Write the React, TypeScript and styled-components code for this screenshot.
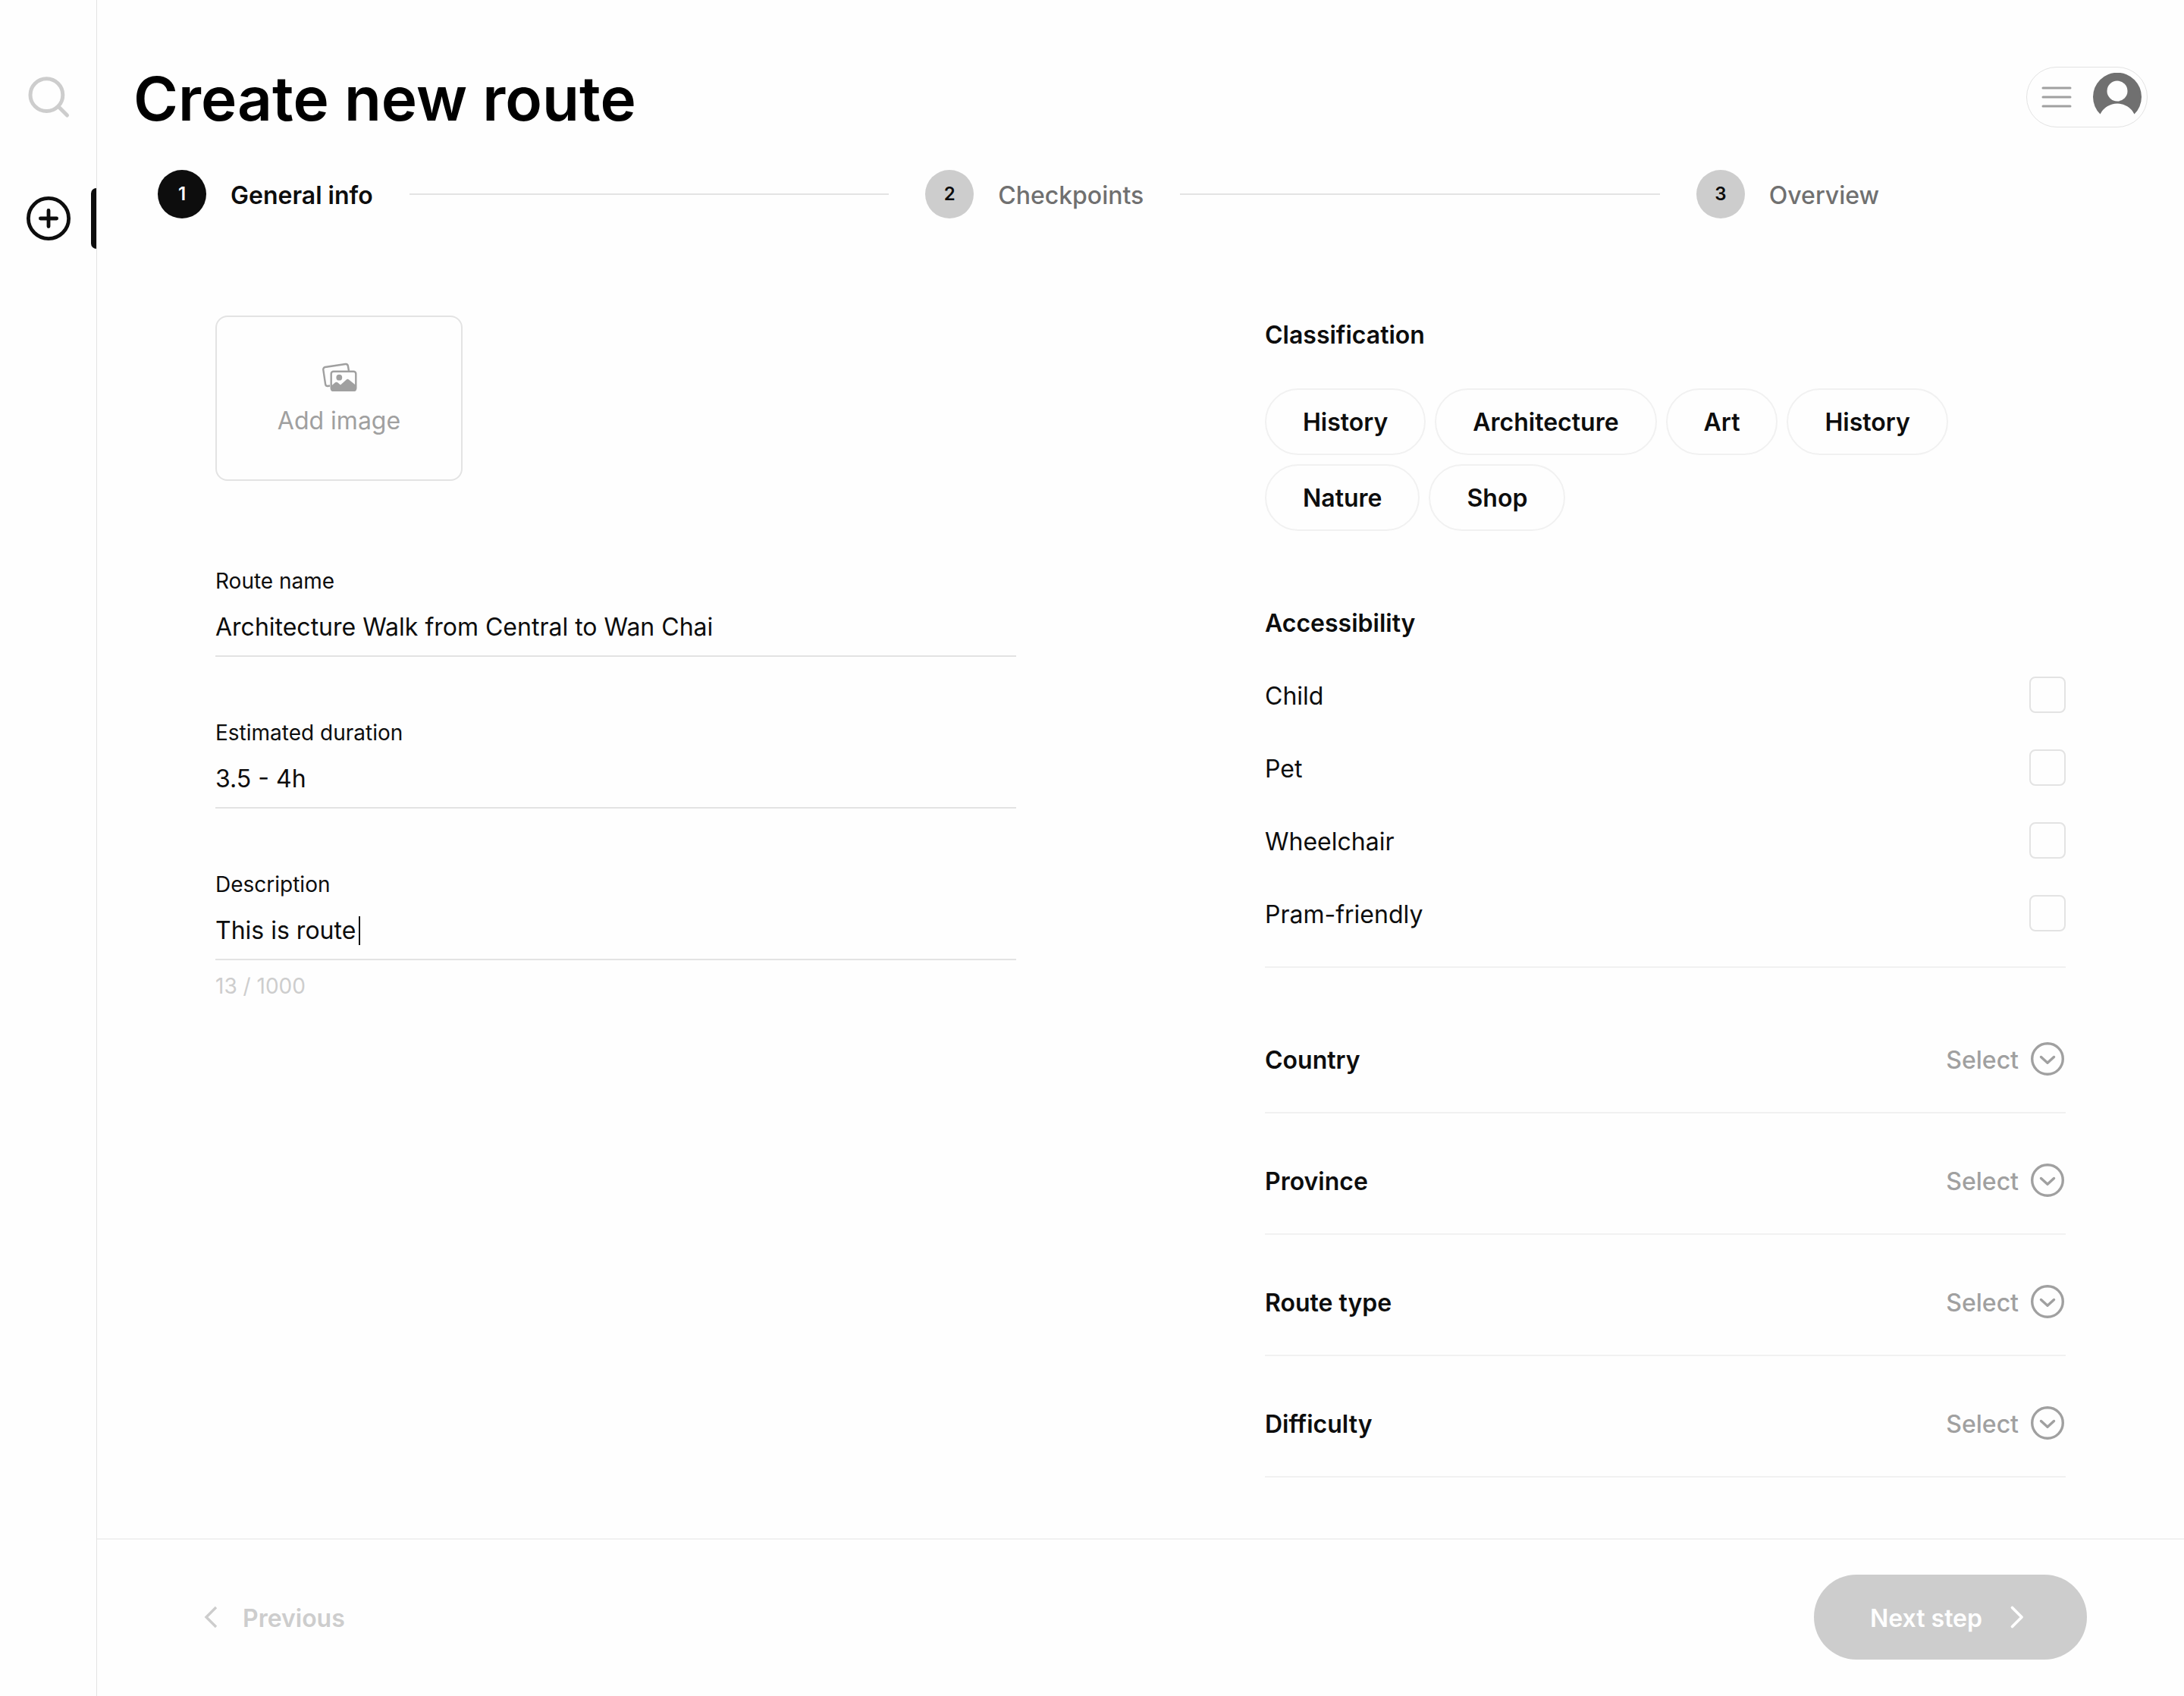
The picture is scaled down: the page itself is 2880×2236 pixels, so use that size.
import React, { useState } from "react";
import styled, { createGlobalStyle, css } from "styled-components";

const color = {
  page: "#fefefe",
  ink: "#0d0d0d",
  title: "#000000",
  grey: "#707070",
  mid: "#a0a0a0",
  soft: "#cdcdcd",
  line: "#e3e3e3",
  faint: "#f1f1f1",
};

const rowText = css`
  padding-top: 4px;
  line-height: 44px;
`;

const GlobalStyle = createGlobalStyle`
  *, *::before, *::after { box-sizing: border-box; }
  body { margin: 0; background: ${color.page}; }
  body, button, input, select {
    font-family: Inter, "Liberation Sans", sans-serif;
    font-size: 32px;
    line-height: 48px;
    color: ${color.ink};
  }
  button { background: none; border: 0; padding: 0; cursor: pointer; }
  svg { display: block; flex: none; }
`;

const Shell = styled.div`
  display: flex;
  min-height: 100vh;
`;

const Sidebar = styled.nav`
  flex: none;
  width: 128px;
  border-right: 1px solid ${color.line};
  padding: 88px 0 0 1px;
  display: flex;
  flex-direction: column;
  gap: 80px;
`;

const NavButton = styled.button<{ $active?: boolean }>`
  position: relative;
  display: flex;
  align-items: center;
  justify-content: center;
  height: 80px;
  color: ${(p) => (p.$active ? color.ink : color.soft)};

  &::after {
    content: "";
    display: ${(p) => (p.$active ? "block" : "none")};
    position: absolute;
    top: 0;
    right: 0;
    width: 7px;
    height: 100%;
    border-radius: 8px 0 0 8px;
    background: ${color.ink};
  }
`;

const Content = styled.div`
  flex: 1;
  min-width: 0;
  display: flex;
  flex-direction: column;
`;

const Header = styled.header`
  display: flex;
  align-items: center;
  justify-content: space-between;
  padding: 80px 48px 0;
`;

const Title = styled.h1`
  margin: 0;
  padding-top: 4px;
  font-size: 80px;
  line-height: 92px;
  font-weight: 600;
  color: ${color.title};
`;

const AccountButton = styled.button`
  display: flex;
  align-items: center;
  justify-content: space-between;
  width: 160px;
  height: 80px;
  padding: 0 7px 0 15px;
  border: 1px solid ${color.line};
  border-radius: 40px;
`;

const Steps = styled.ol`
  display: flex;
  align-items: center;
  gap: 48px;
  list-style: none;
  margin: 0;
  padding: 48px 402px 0 80px;
`;

const Step = styled.li<{ $active?: boolean }>`
  display: flex;
  align-items: center;
  gap: 32px;
  font-weight: ${(p) => (p.$active ? 600 : 500)};
  color: ${(p) => (p.$active ? color.ink : color.grey)};
`;

const StepNumber = styled.span<{ $active?: boolean }>`
  display: grid;
  place-items: center;
  width: 64px;
  height: 64px;
  border-radius: 50%;
  font-size: 24px;
  line-height: 32px;
  font-weight: 600;
  background: ${(p) => (p.$active ? color.ink : color.soft)};
  color: ${(p) => (p.$active ? color.page : color.ink)};
`;

const StepLine = styled.li`
  flex: 1;
  height: 2px;
  background: ${color.line};
`;

const RowText = styled.span`
  ${rowText}
`;

const Form = styled.main`
  flex: 1;
  display: grid;
  grid-template-columns: 1fr 1fr;
  column-gap: 328px;
  padding: 128px 156px 80px;
`;

const Column = styled.div`
  display: flex;
  flex-direction: column;
`;

const ImageButton = styled.button`
  display: flex;
  flex-direction: column;
  align-items: center;
  justify-content: center;
  gap: 12px;
  width: 326px;
  height: 218px;
  border: 2px solid ${color.line};
  border-radius: 16px;
  color: ${color.mid};
`;

const Fields = styled.div`
  display: flex;
  flex-direction: column;
  gap: 80px;
  margin-top: 112px;
`;

const Field = styled.div`
  display: flex;
  flex-direction: column;
`;

const FieldLabel = styled.label`
  font-size: 28px;
  line-height: 40px;
`;

const FieldBox = styled.div`
  display: flex;
  align-items: center;
  gap: 4px;
  height: 80px;
  padding-top: 4px;
  border-bottom: 2px solid ${color.line};
`;

const TextInput = styled.input<{ $hug?: boolean }>`
  flex: ${(p) => (p.$hug ? "none" : "1")};
  field-sizing: ${(p) => (p.$hug ? "content" : "fixed")};
  min-width: 0;
  padding: 0;
  border: 0;
  outline: 0;
  background: none;
  caret-color: ${(p) => (p.$hug ? "transparent" : "auto")};
`;

const Caret = styled.span`
  width: 2px;
  height: 38px;
  background: ${color.ink};
`;

const Counter = styled.span`
  margin-top: 14px;
  font-size: 28px;
  line-height: 40px;
  color: ${color.soft};
`;

const SectionTitle = styled.h2`
  margin: 0;
  font-size: 32px;
  font-weight: 600;
  ${rowText}
`;

const Tags = styled.div`
  display: flex;
  flex-wrap: wrap;
  gap: 12px;
  margin: 48px 0 96px;
`;

const Tag = styled.button`
  height: 88px;
  padding: 2px 48px 0;
  border: 2px solid ${color.faint};
  border-radius: 44px;
  font-weight: 600;
`;

const CheckList = styled.div`
  display: flex;
  flex-direction: column;
  gap: 48px;
  padding: 48px 0 46px;
  border-bottom: 2px solid ${color.faint};
  margin-bottom: 32px;
`;

const CheckRow = styled.label`
  display: flex;
  align-items: center;
  justify-content: space-between;
`;

const CheckBox = styled.input`
  appearance: none;
  width: 48px;
  height: 48px;
  margin: 0;
  border: 2px solid ${color.line};
  border-radius: 8px;
  cursor: pointer;

  &:checked { background: ${color.ink}; }
`;

const SelectRow = styled.div`
  display: flex;
  align-items: center;
  justify-content: space-between;
  padding: 64px 0 46px;
  border-bottom: 2px solid ${color.faint};
`;

const SelectLabel = styled.label`
  font-weight: 600;
  ${rowText}
`;

const SelectBox = styled.div`
  display: flex;
  align-items: center;
  gap: 14px;
  color: ${color.mid};
`;

const SelectInput = styled.select`
  appearance: none;
  field-sizing: content;
  padding: 0;
  border: 0;
  background: none;
  font-weight: 500;
  color: inherit;
  cursor: pointer;
  ${rowText}
`;

const Footer = styled.footer`
  display: flex;
  align-items: center;
  justify-content: space-between;
  padding: 46px 128px 48px;
  border-top: 2px solid ${color.faint};
`;

const FooterButton = styled.button<{ $filled?: boolean }>`
  display: flex;
  align-items: center;
  gap: ${(p) => (p.$filled ? "30px" : "20px")};
  height: 112px;
  padding: ${(p) => (p.$filled ? "0 76px 0 74px" : "0 12px")};
  border-radius: 56px;
  font-weight: 600;
  background: ${(p) => (p.$filled ? color.soft : "none")};
  color: ${(p) => (p.$filled ? color.page : color.soft)};
`;

const SearchIcon = () => (
  <svg width="64" height="64" viewBox="0 0 64 64" fill="none" stroke="currentColor" strokeWidth="5" strokeLinecap="round" aria-hidden="true">
    <circle cx="29.4" cy="29.2" r="21.4" />
    <path d="M45.5 45 56.5 56" />
  </svg>
);

const PlusIcon = () => (
  <svg width="64" height="64" viewBox="0 0 64 64" fill="none" stroke="currentColor" strokeWidth="4.8" strokeLinecap="round" aria-hidden="true">
    <circle cx="32" cy="32" r="26.6" />
    <path d="M32 21.400v21.200M21.400 32h21.200" />
  </svg>
);

const MenuIcon = () => (
  <svg width="48" height="48" viewBox="0 0 48 48" fill="none" stroke={color.mid} strokeWidth="3" strokeLinecap="round" aria-hidden="true">
    <path d="M6 12h36M6 24h36M6 36h36" />
  </svg>
);

const AvatarIcon = () => (
  <svg width="64" height="64" viewBox="0 0 64 64" aria-hidden="true">
    <path fill={color.grey} d="M9.500 54.500A32 32 0 1 1 54.500 54.500A25 25 0 0 0 9.500 54.500Z" />
    <circle cx="32" cy="24" r="13.5" fill={color.page} />
  </svg>
);

const ImagesIcon = () => (
  <svg width="48" height="48" viewBox="-1 -2 48 48" fill="none" stroke="currentColor" strokeWidth="2.4" strokeLinejoin="round" aria-hidden="true">
    <path d="M11 35.500 8.500 36a3 3 0 0 1-3.400-2.500L2.300 14.500A3 3 0 0 1 4.800 11L31.500 7a3 3 0 0 1 3.400 2.500L36 16" />
    <rect x="12.700" y="16.700" width="32.600" height="25.100" rx="3" />
    <circle cx="23.300" cy="24.700" r="3.900" fill="currentColor" stroke="none" />
    <path fill="currentColor" stroke="none" d="M12 36.500 18 31.300a2.500 2.500 0 0 1 3.200 0L25 34.500 32.800 27.500a2.500 2.500 0 0 1 3.200 0L46 35.500V39.500a3.500 3.500 0 0 1-3.500 3.500H15.500a3.500 3.500 0 0 1-3.500-3.500Z" />
  </svg>
);

const ChevronCircleIcon = () => (
  <svg width="48" height="48" viewBox="0 0 48 48" fill="none" stroke="currentColor" strokeWidth="3.4" strokeLinecap="round" strokeLinejoin="round" aria-hidden="true">
    <circle cx="24" cy="24" r="20.300" />
    <path d="M15.500 21.500 24 29.300 32.500 21.500" />
  </svg>
);

const ChevronLeftIcon = () => (
  <svg width="32" height="32" viewBox="0 0 32 32" fill="none" stroke="currentColor" strokeWidth="3.400" aria-hidden="true">
    <path d="M17 3 4 16 17 29" />
  </svg>
);

const ChevronRightIcon = () => (
  <svg width="32" height="32" viewBox="0 0 32 32" fill="none" stroke="currentColor" strokeWidth="3.800" strokeLinecap="round" strokeLinejoin="round" aria-hidden="true">
    <path d="M9.500 3.500 22 16 9.500 28.500" />
  </svg>
);

const tags = ["History", "Architecture", "Art", "History", "Nature", "Shop"];
const accessibility = ["Child", "Pet", "Wheelchair", "Pram-friendly"];
const selects = ["Country", "Province", "Route type", "Difficulty"];
const maxDescription = 1000;

export default function App() {
  const [name, setName] = useState("Architecture Walk from Central to Wan Chai");
  const [duration, setDuration] = useState("3.5 - 4h");
  const [description, setDescription] = useState("This is route");

  return (
    <Shell>
      <GlobalStyle />
      <Sidebar aria-label="Main">
        <NavButton type="button" aria-label="Search"><SearchIcon /></NavButton>
        <NavButton type="button" aria-label="New route" $active><PlusIcon /></NavButton>
      </Sidebar>
      <Content>
        <Header>
          <Title>Create new route</Title>
          <AccountButton type="button" aria-label="Account menu">
            <MenuIcon />
            <AvatarIcon />
          </AccountButton>
        </Header>
        <Steps>
          <Step $active aria-current="step"><StepNumber $active>1</StepNumber><RowText>General info</RowText></Step>
          <StepLine aria-hidden="true" />
          <Step><StepNumber>2</StepNumber><RowText>Checkpoints</RowText></Step>
          <StepLine aria-hidden="true" />
          <Step><StepNumber>3</StepNumber><RowText>Overview</RowText></Step>
        </Steps>
        <Form>
          <Column>
            <ImageButton type="button"><ImagesIcon />Add image</ImageButton>
            <Fields>
              <Field>
                <FieldLabel htmlFor="name">Route name</FieldLabel>
                <FieldBox>
                  <TextInput id="name" value={name} onChange={(e) => setName(e.target.value)} />
                </FieldBox>
              </Field>
              <Field>
                <FieldLabel htmlFor="duration">Estimated duration</FieldLabel>
                <FieldBox>
                  <TextInput id="duration" value={duration} onChange={(e) => setDuration(e.target.value)} />
                </FieldBox>
              </Field>
              <Field>
                <FieldLabel htmlFor="description">Description</FieldLabel>
                <FieldBox>
                  <TextInput
                    id="description"
                    $hug
                    maxLength={maxDescription}
                    value={description}
                    onChange={(e) => setDescription(e.target.value)}
                  />
                  <Caret />
                </FieldBox>
                <Counter>{description.length} / {maxDescription}</Counter>
              </Field>
            </Fields>
          </Column>
          <Column>
            <SectionTitle>Classification</SectionTitle>
            <Tags>
              {tags.map((tag, i) => <Tag type="button" key={i}>{tag}</Tag>)}
            </Tags>
            <SectionTitle>Accessibility</SectionTitle>
            <CheckList>
              {accessibility.map((item) => (
                <CheckRow key={item}><RowText>{item}</RowText><CheckBox type="checkbox" /></CheckRow>
              ))}
            </CheckList>
            {selects.map((item) => (
              <SelectRow key={item}>
                <SelectLabel htmlFor={item}>{item}</SelectLabel>
                <SelectBox>
                  <SelectInput id={item}><option>Select</option></SelectInput>
                  <ChevronCircleIcon />
                </SelectBox>
              </SelectRow>
            ))}
          </Column>
        </Form>
        <Footer>
          <FooterButton type="button"><ChevronLeftIcon /><RowText>Previous</RowText></FooterButton>
          <FooterButton type="button" $filled><RowText>Next step</RowText><ChevronRightIcon /></FooterButton>
        </Footer>
      </Content>
    </Shell>
  );
}
